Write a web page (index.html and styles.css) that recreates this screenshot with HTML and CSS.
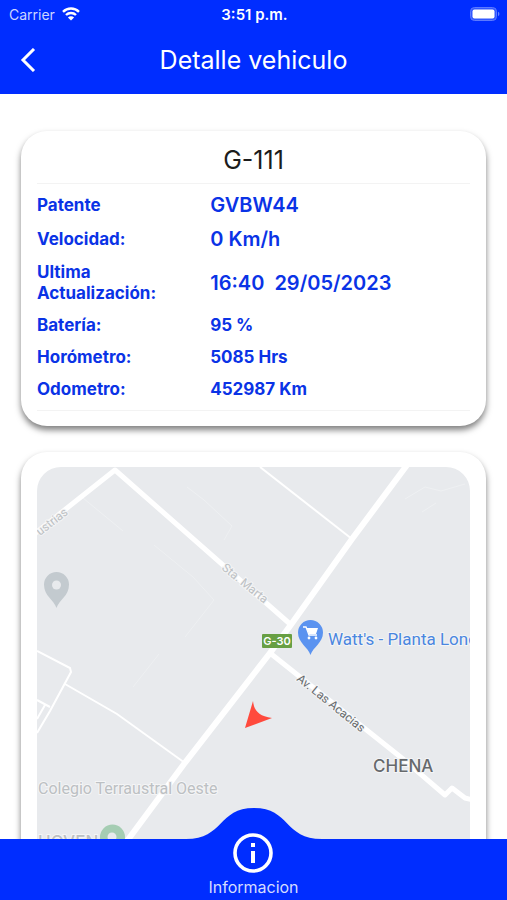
FILE: index.html
```html
<!DOCTYPE html>
<html lang="es">

<head>
    <meta charset="UTF-8">
    <meta name="viewport" content="width=device-width, initial-scale=1.0">
    <title>Detalle vehiculo</title>
    <link rel="stylesheet" href="styles.css">
</head>

<body>
    <header>
        <div class="status-bar">
            <span class="carrier">
                Carrier
                <svg width="18" height="14" viewBox="0 0 18 14" fill="none" stroke="#fff" stroke-width="2.4">
                    <path d="M1 4.8a11.4 11.4 0 0 1 16 0" />
                    <path d="M4 8a7.2 7.2 0 0 1 10 0" />
                    <path d="M9 13.6 5.9 10.5a4.4 4.4 0 0 1 6.2 0z" fill="#fff" stroke="none" />
                </svg>
            </span>
            <span class="clock">3:51 p.m.</span>
            <span class="battery">
                <svg width="30" height="14" viewBox="0 0 30 14">
                    <rect x="0.5" y="0.5" width="26" height="13" rx="4" fill="#3358ff" stroke="#5c7aff" />
                    <rect x="2.5" y="2.5" width="22" height="9" rx="2" fill="#fff" />
                    <path d="M28 4.8v4.4a2.4 2.4 0 0 0 0-4.4z" fill="#6683ff" />
                </svg>
            </span>
        </div>
        <div class="title-bar">
            <button class="back-button" aria-label="Volver">
                <svg width="16" height="24" viewBox="0 0 16 24" fill="none" stroke="#fff" stroke-width="3">
                    <path d="M14 1 3 12l11 11" />
                </svg>
            </button>
            <h1>Detalle vehiculo</h1>
        </div>
    </header>

    <main>
        <section class="card">
            <h2>G-111</h2>
            <table class="details">
                <tr class="big">
                    <th scope="row">Patente</th>
                    <td>GVBW44</td>
                </tr>
                <tr class="big">
                    <th scope="row">Velocidad:</th>
                    <td>0 Km/h</td>
                </tr>
                <tr class="big">
                    <th scope="row">Ultima Actualización:</th>
                    <td>16:40&nbsp; 29/05/2023</td>
                </tr>
                <tr>
                    <th scope="row">Batería:</th>
                    <td>95 %</td>
                </tr>
                <tr>
                    <th scope="row">Horómetro:</th>
                    <td>5085 Hrs</td>
                </tr>
                <tr>
                    <th scope="row">Odometro:</th>
                    <td>452987 Km</td>
                </tr>
            </table>
        </section>

        <section class="card">
            <svg class="map" viewBox="0 0 433 460" preserveAspectRatio="xMidYMin slice">
                <!-- paths -->
                <g class="trail">
                    <path d="M46 31 86 64M117 78l39 32 21 23-29 37M150 20l17 13 28 26-8 14M96 220l26-33M368 32l20-12 16 4 24-7M385 45l14-9" />
                </g>

                <!-- streets -->
                <g class="street">
                    <path d="M223 0 315 72" />
                    <path d="M0 184 33 201 34 205 13 244 0 266" />
                    <path d="M28 217 80 247 148 296" />
                    <path d="M0 233 13 240M8 238 0 252" />
                </g>
                <g class="road">
                    <path d="M-4 68 78 3 253 157" />
                    <path d="M233 186 366 292 408 328 415 321 428 331 436 333" />
                </g>
                <path class="road main-road" d="M370 -2 315 72 253 159 233 186 147 297 93 370 26 460" />

                <text class="street-name faded" transform="translate(3 69) rotate(-38)">ustrias</text>
                <text class="street-name faded" transform="translate(184 102) rotate(39)">Sta. Marta</text>
                <text class="street-name" transform="translate(259 213) rotate(39)">Av. Las Acacias</text>

                <!-- places -->
                <path class="pin" d="M19.5 141C17 133 7 129 7 117.5a12.5 12.5 0 0 1 25 0C32 129 22 133 19.5 141z" />
                <circle cx="19.5" cy="118" r="4.5" fill="#e8eaed" />
                <text class="place faded" x="1" y="327">Colegio Terraustral Oeste</text>

                <text class="town faded" x="1" y="381">HOVEN</text>
                <path class="pin school" d="M75 393C73 385 63 381 63 370a12.5 12.5 0 0 1 25 0C88 381 77 385 75 393z" />
                <circle cx="75" cy="370" r="4.5" fill="#e8eaed" />

                <rect x="225" y="167" width="30" height="14" rx="1" fill="#689f43" />
                <text class="route" x="240" y="178">G-30</text>

                <path class="pin shop" d="M273.5 188C271 180 261 176 261 165.5a12.5 12.5 0 0 1 25 0C286 176 276 180 273.5 188z" />
                <path d="M266 160h3l3 8h8" fill="none" stroke="#fff" stroke-width="1.3" />
                <path d="M269.5 161h11.500l-2 6h-7z" fill="#fff" />
                <circle cx="272" cy="171" r="1.4" fill="#fff" />
                <circle cx="279" cy="171" r="1.4" fill="#fff" />
                <text class="place shop-name" x="291" y="178">Watt's - Planta Lond</text>

                <text class="town" x="336" y="305">CHENA</text>

                <!-- vehicle -->
                <path d="M216 234C217 243 221 249 235 251L208 261z" fill="#ff4a3d" />
            </svg>
        </section>
    </main>

    <nav>
        <svg class="bump" width="136" height="32" viewBox="0 0 136 32">
            <path d="M0 32V31C38 31 32 0 68 0s30 31 68 31v1z" fill="#002dff" />
        </svg>
        <a href="#informacion">
            <svg width="44" height="44" viewBox="0 0 44 44">
                <circle cx="22" cy="22" r="18" fill="none" stroke="#fff" stroke-width="3.6" />
                <path d="M20 20h4v12h-4zM20 12h4v4h-4z" fill="#fff" />
            </svg>
            Informacion
        </a>
    </nav>
</body>

</html>
```

FILE: styles.css
```css
* {
    box-sizing: border-box;
}

body {
    margin: 0;
    height: 100vh;
    display: flex;
    flex-direction: column;
    overflow: hidden;
    background: #ffffff;
    font-family: Inter, "Liberation Sans", sans-serif;
}

header {
    flex: none;
    background: #002dff;
    color: #ffffff;
}

.status-bar {
    display: grid;
    grid-template-columns: 1fr auto 1fr;
    align-items: center;
    height: 28px;
    padding: 0 7px 0 9px;
    font-size: 14px;
}

.carrier {
    display: flex;
    align-items: center;
    gap: 7px;
    color: #ccd5ff;
}

.clock {
    font-size: 15px;
    font-weight: 600;
}

.battery {
    display: flex;
    justify-content: flex-end;
}

.title-bar {
    display: grid;
    grid-template-columns: 56px 1fr 56px;
    align-items: center;
    height: 66px;
    padding-bottom: 2px;
}

.title-bar h1 {
    margin: 0;
    font-size: 25px;
    font-weight: 400;
    text-align: center;
}

.back-button {
    display: flex;
    justify-content: center;
    padding: 12px;
    border: none;
    background: none;
    cursor: pointer;
}

main {
    flex: 1;
    min-height: 0;
    padding: 37px 21px 0;
    overflow-y: auto;
    scrollbar-width: none;
}

.card {
    margin-bottom: 26px;
    padding: 15px 16px;
    border-radius: 26px;
    background: #ffffff;
    box-shadow: 0 4px 6px rgba(0, 0, 0, 0.5);
}

.card h2 {
    margin: 0;
    padding-bottom: 9px;
    border-bottom: 1px solid #f3f3f3;
    color: #1c1c1c;
    font-size: 25px;
    line-height: 28px;
    font-weight: 400;
    text-align: center;
}

.details {
    width: 100%;
    padding: 5px 0 4px;
    border-bottom: 1px solid #f3f3f3;
    border-spacing: 0;
    table-layout: fixed;
    color: #0a33e6;
    font-size: 17px;
    line-height: 21px;
}

.details th,
.details td {
    padding: 5px 0 6px;
    text-align: left;
    font-weight: 700;
}

.details th {
    width: 40%;
    padding-right: 32px;
}

.details .big td {
    font-size: 20px;
    line-height: 23px;
    font-weight: 600;
}

.map {
    display: block;
    width: 100%;
    height: 460px;
    border-radius: 24px;
    background: #e8eaed;
}

.trail {
    fill: none;
    stroke: #eef0f2;
    stroke-width: 1;
}

.street {
    fill: none;
    stroke: #ffffff;
    stroke-width: 2;
}

.road {
    fill: none;
    stroke: #ffffff;
    stroke-width: 5;
    stroke-linejoin: round;
}

.main-road {
    stroke-width: 6;
}

.map text {
    paint-order: stroke;
    stroke: #f4f5f6;
    stroke-width: 2px;
}

.map .street-name {
    fill: #66696c;
    font-family: Roboto, sans-serif;
    font-size: 12px;
}

.place {
    font-family: Roboto, sans-serif;
    font-size: 16px;
}

.map .shop-name {
    fill: #4a86e0;
    font-size: 17px;
}

.town {
    fill: #66696c;
    font-size: 17px;
    font-weight: 500;
}

.map .faded {
    fill: #bcc0c3;
}

.map .route {
    fill: #ffffff;
    stroke: none;
    font-size: 11px;
    font-weight: 600;
    text-anchor: middle;
}

.pin {
    fill: #c3cacf;
}

.school {
    fill: #a5cdb3;
}

.shop {
    fill: #5b93f0;
}

nav {
    position: relative;
    flex: none;
    display: flex;
    justify-content: center;
    height: 61px;
    background: #002dff;
}

.bump {
    position: absolute;
    bottom: 100%;
    left: 50%;
    margin: 0 0 -1px -68px;
}

nav a {
    position: relative;
    display: flex;
    flex-direction: column;
    align-items: center;
    justify-content: flex-end;
    gap: 2px;
    padding-bottom: 3px;
    color: #d5dcff;
    font-size: 16px;
    line-height: 20px;
    text-decoration: none;
}

nav a svg {
    flex: none;
}
```
